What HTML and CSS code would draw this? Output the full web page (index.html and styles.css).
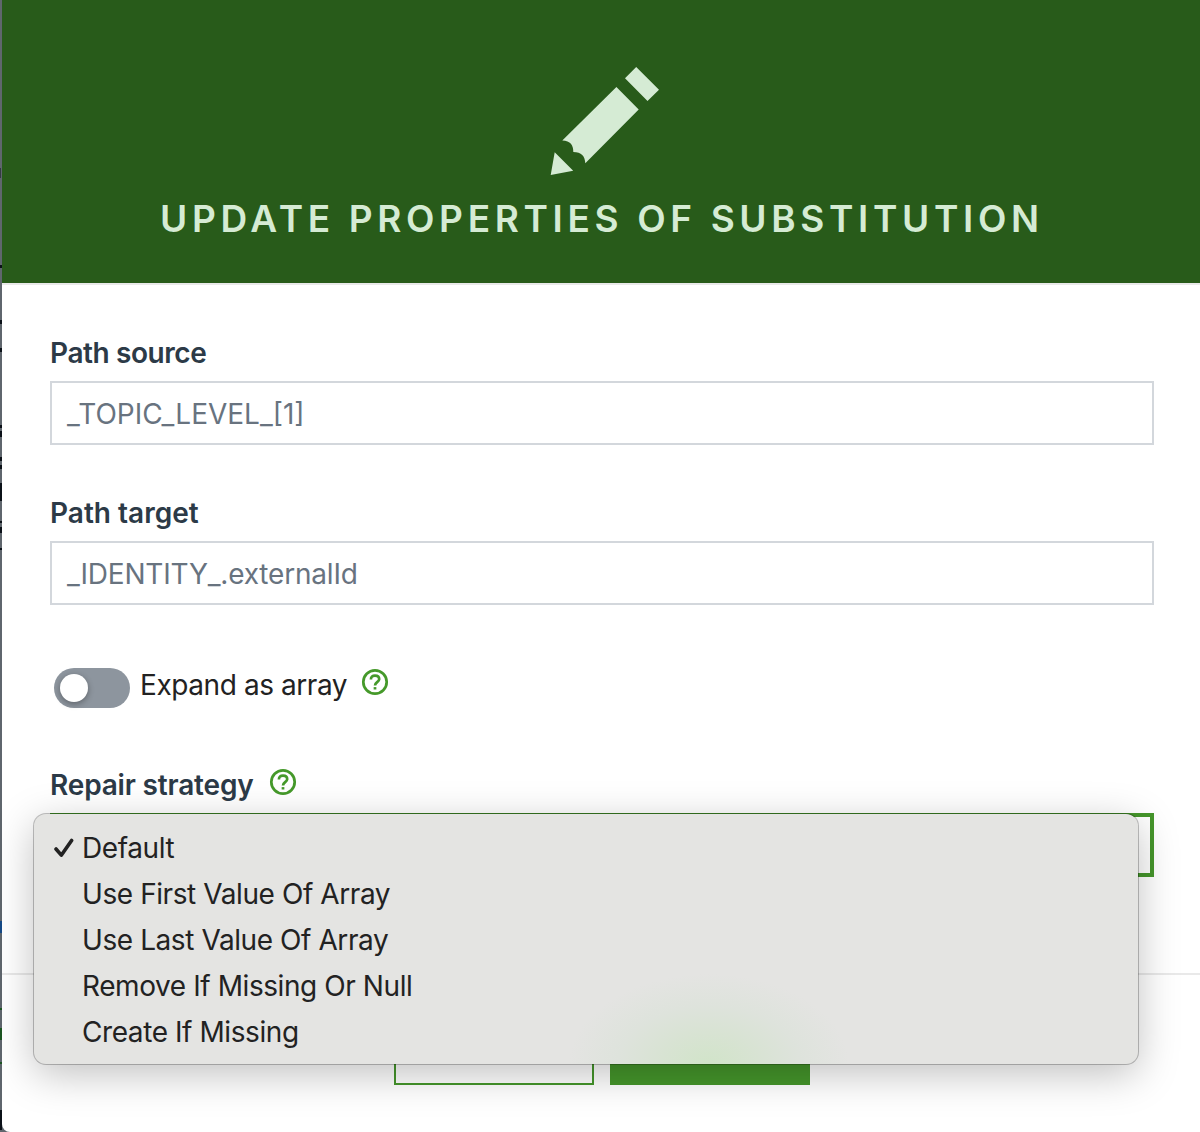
FILE: index.html
```html
<!DOCTYPE html>
<html lang="en">
<head>
<meta charset="utf-8">
<title>Update properties of substitution</title>
<link rel="stylesheet" href="styles.css">
</head>
<body>
<div class="page-edge">
  <svg width="2" height="1132" viewBox="0 0 2 1132" aria-hidden="true">
    <path d="M0 265h2v3H0zM0 320h2v4H0zM0 348h2v4H0zM0 425h2v3H0zM0 431h2v6H0zM0 457h2v4H0zM0 465h2v4H0zM0 483h2v18H0zM0 521h2v2H0zM0 527h2v6H0zM0 548h2v2H0zM0 1110h2v20H0z" fill="#0b1118"/>
    <path d="M0 168h1v10H0z" fill="#343b43"/>
    <path d="M0 921h2v12H0z" fill="#164a87"/>
    <path d="M0 1008h2v2H0zM0 1028h2v12H0zM0 1062h2v2H0z" fill="#1c5522"/>
  </svg>
</div>
<main class="modal">
  <header class="modal-header">
    <svg class="pencil" width="110" height="110" viewBox="550 66 110 110" aria-hidden="true">
      <path d="M636.2 67 659 89.700 647.500 101 625 78.200zM616.400 87 638.700 109.500 585.300 163.200C585 156 581.500 152 573.300 152 573.500 145 570.500 140.700 562.300 140.400zM554.700 152.300 573.200 170.800 550.700 175z"/>
    </svg>
    <h1 class="title">UPDATE PROPERTIES OF SUBSTITUTION</h1>
  </header>
  <form class="modal-body">
    <div class="field">
      <label class="label tight">Path source</label>
      <div class="input">_TOPIC_LEVEL_[1]</div>
    </div>
    <div class="field">
      <label class="label">Path target</label>
      <div class="input identity">_IDENTITY_.externalId</div>
    </div>
    <div class="switch-row">
      <span class="switch"><span class="knob"></span></span>
      <span class="tight">Expand as array</span>
      <svg class="help" width="28" height="28" viewBox="0 0 28 28" aria-hidden="true"><circle cx="14" cy="14" r="11.700"/><path d="M9.900 11.500C9.900 8.800 11.600 7.600 14 7.600s4.200 1.300 4.200 3.600c0 2.800-4.200 3.200-4.200 6.200"/><path d="M14 19.100v2.400"/></svg>
    </div>
    <div class="field">
      <label class="label label-help"><span>Repair strategy</span>
        <svg class="help" width="28" height="28" viewBox="0 0 28 28" aria-hidden="true"><circle cx="14" cy="14" r="11.700"/><path d="M9.900 11.500C9.900 8.800 11.600 7.600 14 7.600s4.200 1.300 4.200 3.600c0 2.800-4.200 3.200-4.200 6.200"/><path d="M14 19.100v2.400"/></svg>
      </label>
      <div class="select">
        <ul class="menu">
          <li><svg class="check" width="20" height="20" viewBox="0 0 20 20" aria-hidden="true"><path d="M2 11 7.300 17.200 17.600 2.500"/></svg>Default</li>
          <li>Use First Value Of Array</li>
          <li>Use Last Value Of Array</li>
          <li>Remove If Missing Or Null</li>
          <li>Create If Missing</li>
        </ul>
      </div>
    </div>
  </form>
  <footer class="modal-footer">
    <div class="button"></div>
    <div class="button primary"></div>
  </footer>
</main>
</body>
</html>
```
FILE: styles.css
```css
* { box-sizing: border-box; }
body {
  margin: 0;
  height: 1132px;
  overflow: hidden;
  display: flex;
  background: #5f666d;
  font-family: Inter, "Liberation Sans", sans-serif;
  font-size: 28px;
  line-height: 40px;
  color: #222;
}
.page-edge { width: 2px; flex: none; }
.page-edge svg { display: block; }
.modal {
  flex: 1;
  height: 1132px;
  background: #fff;
  border-bottom-left-radius: 8px;
}
.modal-header {
  height: 285px;
  padding-top: 66px;
  background: #285b1a;
  border-bottom: 2px solid #e9e9e9;
  display: flex;
  flex-direction: column;
  align-items: center;
}
.pencil { fill: #d5ebd4; margin-left: 8px; }
.title {
  align-self: flex-start;
  margin: 19px 0 0 158px;
  font-size: 37px;
  line-height: 48px;
  font-weight: 600;
  letter-spacing: 4.65px;
  color: #d5ebd4;
  white-space: nowrap;
}
.modal-body { padding: 48px 46px 0 48px; height: 688px; }
.field { height: 160px; }
.label {
  display: block;
  height: 48px;
  font-weight: 600;
  color: #2c3a47;
}
.tight { letter-spacing: -0.42px; }
.label-help { display: flex; gap: 15px; letter-spacing: -0.17px; }
.input {
  height: 64px;
  padding: 11px 15px;
  border: 2px solid #d3d7dc;
  color: #68737f;
}
.identity { letter-spacing: -0.2px; }
.switch-row {
  height: 112px;
  display: flex;
  align-items: flex-start;
  padding: 12px 0 0 4px;
}
.switch {
  width: 76px;
  height: 40px;
  margin: 3px 10px 0 0;
  padding: 6px;
  border-radius: 20px;
  background: #8d959e;
}
.knob {
  display: block;
  width: 28px;
  height: 28px;
  border-radius: 50%;
  background: #fff;
  box-shadow: 0 2px 6px #0005;
}
.help { fill: none; stroke: #45992a; stroke-width: 2.700; flex: none; }
.switch-row .help { margin: 3px 0 0 14px; }
.label-help .help { margin-top: 3px; }
.select {
  position: relative;
  height: 64px;
  border: 4px solid #45962b;
}
.menu {
  position: absolute;
  z-index: 2;
  left: -20px;
  top: -3px;
  width: 1104px;
  height: 250px;
  margin: 0;
  padding: 11px 0;
  list-style: none;
  border-radius: 12px;
  letter-spacing: -0.42px;
  background: radial-gradient(ellipse 140px 90px at 675px 250px, #d1e4c9, #d8e3d3 35%, #dee3dc 65%, #e4e4e2) #e4e4e2;
  box-shadow: 0 0 0 1px #0000003d, 0 10px 40px #00000040;
}
.menu li {
  position: relative;
  height: 46px;
  padding-left: 48px;
  line-height: 46px;
  white-space: nowrap;
}
.check {
  position: absolute;
  left: 20px;
  top: 13px;
  fill: none;
  stroke: #222;
  stroke-width: 3.600;
  stroke-linecap: round;
  stroke-linejoin: round;
}
.modal-footer {
  height: 159px;
  padding: 46px 0 0 392px;
  border-top: 2px solid #e9e9e9;
  display: flex;
  gap: 16px;
}
.button { width: 200px; height: 64px; border: 2px solid #45962b; }
.primary { background: #45962b; }
```
